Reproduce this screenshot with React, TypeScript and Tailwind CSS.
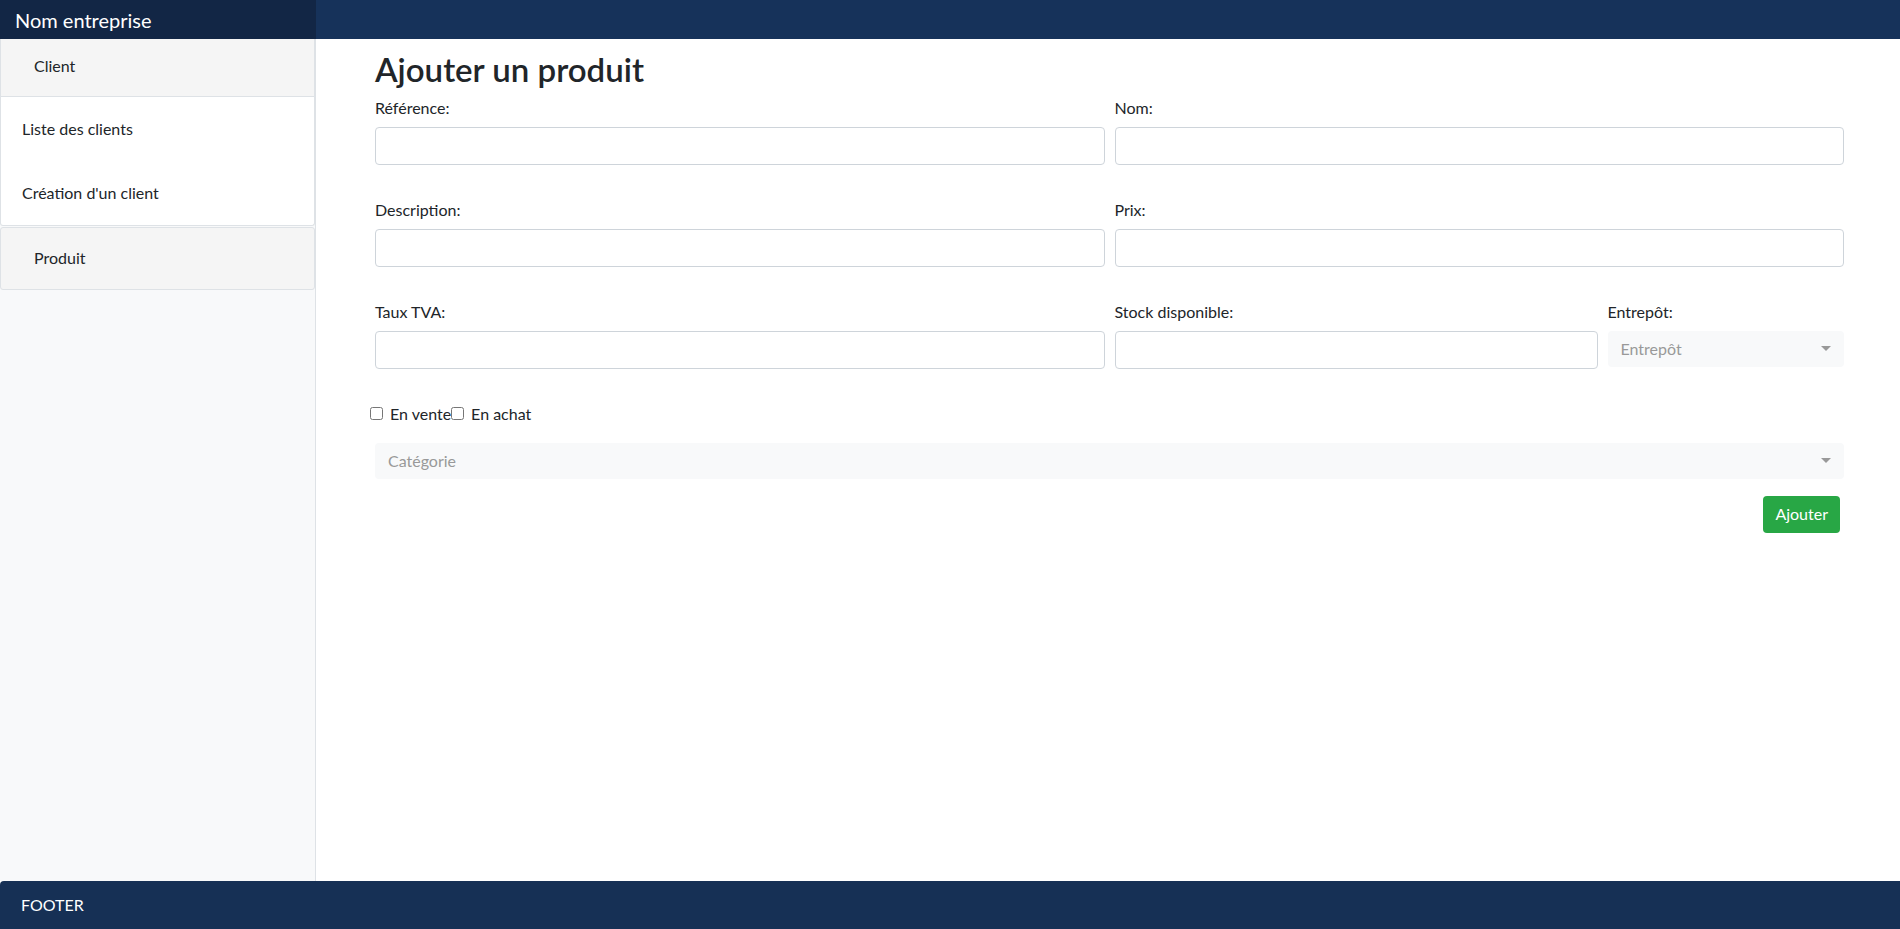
export default function App() {
  return (
    <div className="flex h-screen flex-col bg-white font-['Lato','Liberation_Sans',sans-serif] text-[16px] text-[#212529]">
      {/* Header */}
      <header className="flex h-[39px] shrink-0 bg-[#16325a]">
        <div className="flex w-[316px] items-center bg-[#122645] pl-[15px] text-[20px] text-white">Nom entreprise</div>
      </header>

      <div className="flex min-h-0 flex-1">
        {/* Sidebar */}
        <aside className="w-[316px] shrink-0 border-r border-[#dee2e6] bg-[#f8f9fa]">
          <div className="border-x border-b border-[#dee2e6] bg-[#f5f5f5]">
            <div className="flex h-[57px] items-center pb-[4px] pl-[33px]">Client</div>
          </div>
          <div className="rounded-b-[3px] border-x border-b border-[#dee2e6] bg-white">
            <div className="flex h-[64px] items-center pl-[21px]">Liste des clients</div>
            <div className="flex h-[64px] items-center pl-[21px]">Création d'un client</div>
          </div>
          <div className="mt-[1px] rounded-[3px] border border-[#dee2e6] bg-[#f5f5f5]">
            <div className="flex h-[61px] items-center pb-[2px] pl-[33px]">Produit</div>
          </div>
        </aside>

        {/* Main */}
        <main className="flex-1 pl-[59px] pr-[56px] pt-[11px]">
          <h2 className="text-[33px] font-semibold leading-[1.2]">Ajouter un produit</h2>

          <div className="mt-[6px] grid grid-cols-2 gap-x-[10px] gap-y-[33px]">
            <Field label="Référence:" />
            <Field label="Nom:" />
            <Field label="Description:" />
            <Field label="Prix:" />
            <Field label="Taux TVA:" />
            <div className="grid grid-cols-[483px_1fr] gap-x-[10px]">
              <Field label="Stock disponible:" />
              <div>
                <label className="block h-[24px] leading-[24px]">Entrepôt:</label>
                <SelectBox placeholder="Entrepôt" className="mt-[7px] h-[36px]" />
              </div>
            </div>
          </div>

          <div className="mt-[33px] flex h-[24px] items-center">
            <label className="flex items-center">
              <input type="checkbox" className="ml-[-5px] mr-[7px] h-[13px] w-[13px]" />
              En vente
            </label>
            <label className="flex items-center">
              <input type="checkbox" className="mr-[7px] h-[13px] w-[13px]" />
              En achat
            </label>
          </div>

          <SelectBox placeholder="Catégorie" className="mt-[17px] h-[36px]" />

          <div className="mt-[17px] flex justify-end pr-[4px]">
            <button className="h-[37px] rounded-[4px] bg-[#28a745] px-[12px] text-white">Ajouter</button>
          </div>
        </main>
      </div>

      {/* Footer */}
      <footer className="flex h-[48px] shrink-0 items-center rounded-tl-[4px] bg-[#163055] pl-[21px] text-white">
        FOOTER
      </footer>
    </div>
  )
}

function Field({ label }: { label: string }) {
  return (
    <div>
      <label className="block h-[24px] leading-[24px]">{label}</label>
      <input type="text" className="mt-[7px] block h-[38px] w-full rounded-[4px] border border-[#ced4da] bg-white px-3 outline-none" />
    </div>
  )
}

function SelectBox({ placeholder, className }: { placeholder: string; className: string }) {
  return (
    <div className={`flex w-full items-center justify-between rounded-[4px] bg-[#f8f9fa] pl-[13px] pr-[13px] text-[#999] ${className}`}>
      <span>{placeholder}</span>
      <svg width="10" height="5" viewBox="0 0 10 5">
        <path d="M0 0 L10 0 L5 5 Z" fill="#999" />
      </svg>
    </div>
  )
}
